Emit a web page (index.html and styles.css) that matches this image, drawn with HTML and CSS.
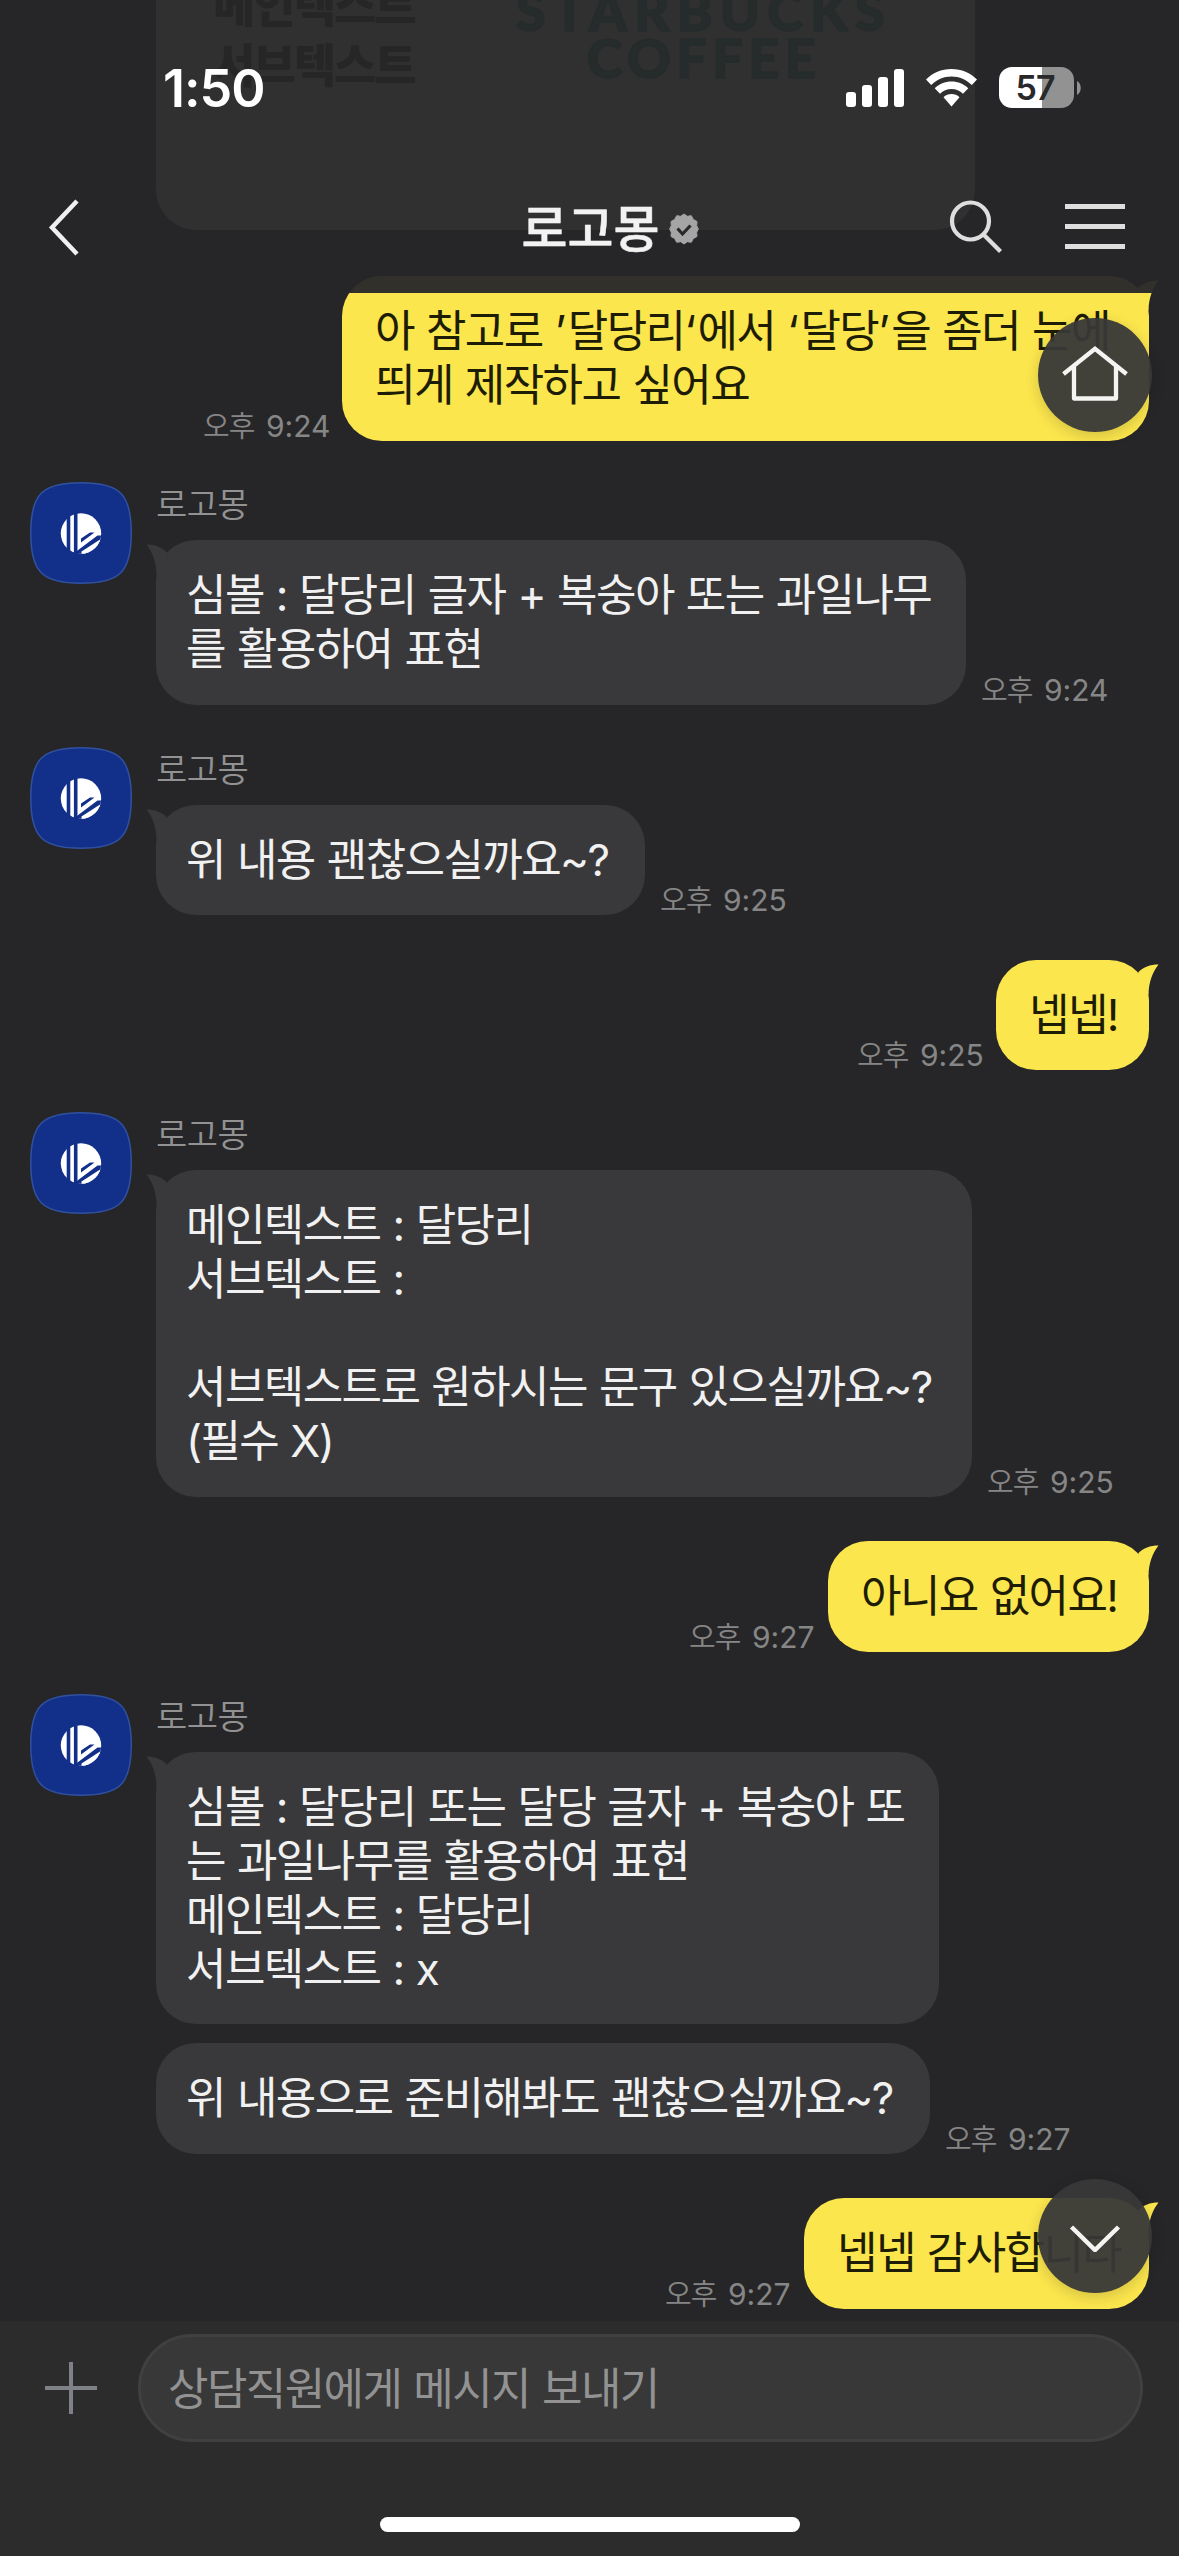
FILE: index.html
```html
<!DOCTYPE html>
<html lang="ko">
<head>
<meta charset="utf-8">
<title>로고몽</title>
<link rel="stylesheet" href="styles.css">
</head>
<body>
<svg class="defs" width="0" height="0" aria-hidden="true">
  <defs>
    <symbol id="logo" viewBox="0 0 102 102">
      <path class="tile" d="M51 .75C90 .75 101.250 12 101.250 51S90 101.250 51 101.250 .75 90 .75 51 12 .75 51 .75Z"/>
      <clipPath id="disc"><circle cx="51" cy="51.500" r="20.200"/></clipPath>
      <g clip-path="url(#disc)">
        <path fill="#fff" d="M30 30h6.700v44H30zM40.300 30h3.600v40.500h-3.600zM47.500 30h25v44H50L47.500 69z"/>
        <path fill="#12308a" d="M51 56.500 60 50.500h4.500L51 60.500zM47.500 68.500 67.500 53.500H74V55L49 74H44z"/>
        <path fill="#fff" d="M51.500 69.500 73 55.500V74H51.500z"/>
      </g>
    </symbol>
    <symbol id="tail" viewBox="0 0 24 34">
      <path d="M.5 4.500C9 4.500 15.500 7 20.500 12L24 34H10.500C10 22 7 13 .5 4.500Z"/>
    </symbol>
  </defs>
</svg>
<div class="screen">
  <main class="chat">
    <section class="row mine first">
      <time>오후 <b>9:24</b></time>
      <div class="bubble w-first">
        <svg class="tail"><use href="#tail"/></svg>
        <p>아 참고로 <i>’</i>달당리<i>‘</i>에서 <i>‘</i>달당<i>’</i>을 좀더 눈에</p>
        <p>띄게 제작하고 싶어요</p>
      </div>
    </section>

    <section class="row theirs">
      <svg class="avatar"><use href="#logo"/></svg>
      <div class="stack">
        <h2>로고몽</h2>
        <div class="line">
          <div class="bubble w-symbol">
            <svg class="tail"><use href="#tail"/></svg>
            <p>심볼 : 달당리 글자 + 복숭아 또는 과일나무</p>
            <p>를 활용하여 표현</p>
          </div>
          <time>오후 <b>9:24</b></time>
        </div>
      </div>
    </section>

    <section class="row theirs">
      <svg class="avatar"><use href="#logo"/></svg>
      <div class="stack">
        <h2>로고몽</h2>
        <div class="line">
          <div class="bubble w-ok">
            <svg class="tail"><use href="#tail"/></svg>
            <p>위 내용 괜찮으실까요~?</p>
          </div>
          <time>오후 <b>9:25</b></time>
        </div>
      </div>
    </section>

    <section class="row mine">
      <time>오후 <b>9:25</b></time>
      <div class="bubble w-yes">
        <svg class="tail"><use href="#tail"/></svg>
        <p>넵넵!</p>
      </div>
    </section>

    <section class="row theirs">
      <svg class="avatar"><use href="#logo"/></svg>
      <div class="stack">
        <h2>로고몽</h2>
        <div class="line">
          <div class="bubble w-sub">
            <svg class="tail"><use href="#tail"/></svg>
            <p>메인텍스트 : 달당리</p>
            <p>서브텍스트 :</p>
            <p>&nbsp;</p>
            <p>서브텍스트로 원하시는 문구 있으실까요~?</p>
            <p>(필수 X)</p>
          </div>
          <time>오후 <b>9:25</b></time>
        </div>
      </div>
    </section>

    <section class="row mine">
      <time>오후 <b>9:27</b></time>
      <div class="bubble w-none">
        <svg class="tail"><use href="#tail"/></svg>
        <p>아니요 없어요!</p>
      </div>
    </section>

    <section class="row theirs">
      <svg class="avatar"><use href="#logo"/></svg>
      <div class="stack">
        <h2>로고몽</h2>
        <div class="line">
          <div class="bubble w-recap">
            <svg class="tail"><use href="#tail"/></svg>
            <p>심볼 : 달당리 또는 달당 글자 + 복숭아 또</p>
            <p>는 과일나무를 활용하여 표현</p>
            <p>메인텍스트 : 달당리</p>
            <p>서브텍스트 : x</p>
          </div>
        </div>
        <div class="line next">
          <div class="bubble w-ready">
            <p>위 내용으로 준비해봐도 괜찮으실까요~?</p>
          </div>
          <time>오후 <b>9:27</b></time>
        </div>
      </div>
    </section>

    <section class="row mine">
      <time>오후 <b>9:27</b></time>
      <div class="bubble w-thanks">
        <svg class="tail"><use href="#tail"/></svg>
        <p>넵넵 감사합니다</p>
      </div>
    </section>
  </main>

  <header class="top">
    <div class="behind" aria-hidden="true">
      <div class="sample">
        <div class="sample-ko"><span>메인텍스트</span><span>서브텍스트</span></div>
        <div class="sample-en"><span class="en1">STARBUCKS</span><span class="en2">COFFEE</span></div>
      </div>
    </div>
    <div class="status">
      <span class="clock">1:50</span>
      <div class="indicators">
        <svg width="58" height="38" viewBox="0 0 58 38" fill="#fff"><rect y="23" width="10" height="15" rx="3"/><rect x="16" y="16" width="10" height="22" rx="3"/><rect x="32" y="8" width="10" height="30" rx="3"/><rect x="48" width="10" height="38" rx="3"/></svg>
        <svg class="wifi" width="51" height="38" viewBox="0 0 51 38" fill="#fff"><path d="M25.500 0C35.500 0 44.500 4 51 10.500L45.800 16C40.500 10.800 33.500 7.500 25.500 7.500S10.500 10.800 5.200 16L0 10.500C6.500 4 15.500 0 25.500 0Z"/><path d="M25.500 12.500C32 12.500 38 15 42.300 19.200L37 24.700C34 21.800 30 20 25.500 20S17 21.800 14 24.700L8.700 19.200C13 15 19 12.500 25.500 12.500Z"/><path d="M25.500 25C28.500 25 31.300 26.200 33.500 28.200L25.500 37.500 17.500 28.200C19.700 26.200 22.500 25 25.500 25Z"/></svg>
        <div class="battery"><span>57</span></div>
        <svg width="4" height="14" viewBox="0 0 4 14"><path d="M0 0C5 3 5 11 0 14Z" fill="#929293"/></svg>
      </div>
    </div>
    <nav class="nav">
      <svg class="back" width="34" height="60" viewBox="0 0 34 60"><path d="M31 4 6 30.500 31 57" fill="none" stroke="#f0f0f0" stroke-width="4.500"/></svg>
      <h1>로고몽<svg width="30" height="32" viewBox="0 0 30 32"><path fill="#a5a5a6" stroke="#a5a5a6" stroke-linejoin="round" d="m15 1 3.300 2.300 4-.6 2 3.700 3.700 2.200-.3 4.100L29.300 16l-1.600 3.300.3 4.100-3.700 2.200-2 3.700-4-.6L15 31l-3.300-2.300-4 .6-2-3.700L2 23.400l.3-4.100L.7 16l1.600-3.300L2 8.600l3.700-2.200 2-3.700 4 .6Z"/><path d="m8.500 15.500 5 5.500 8-8.500" fill="none" stroke="#29292b" stroke-width="3.200"/></svg></h1>
      <div class="actions">
        <svg width="54" height="56" viewBox="0 0 54 56" fill="none" stroke="#dedede" stroke-width="4.200"><circle cx="21.500" cy="22" r="18.500"/><path d="m34.500 35.500 17 17"/></svg>
        <svg width="60" height="46" viewBox="0 0 60 46" fill="#dedede"><rect width="60" height="5"/><rect y="20" width="60" height="5"/><rect y="40" width="60" height="5"/></svg>
      </div>
    </nav>
  </header>

  <button class="fab home" aria-label="홈"><svg width="68" height="58" viewBox="0 0 68 58" fill="none" stroke="#f4f4f2" stroke-width="4.300" stroke-linejoin="round"><path d="M2.500 28 34 2.800 65.500 28" stroke-linejoin="miter"/><path d="M13 21v31.500h42V21"/></svg></button>
  <button class="fab down" aria-label="아래로"><svg width="54" height="32" viewBox="0 0 54 32" fill="none" stroke="#f4f4f2" stroke-width="4.500"><path d="M3.500 7 27 30 50.500 7"/></svg></button>

  <footer class="composer">
    <div class="entry">
      <svg width="54" height="54" viewBox="0 0 54 54" stroke="#7e8187" stroke-width="4"><path d="M27 1v52M1 27h52"/></svg>
      <div class="field">상담직원에게 메시지 보내기</div>
    </div>
    <div class="indicator"></div>
  </footer>
</div>
</body>
</html>
```
FILE: styles.css
```css
* { box-sizing: border-box; margin: 0; padding: 0; }
body { background: #262628; font-family: "Noto Sans CJK KR", sans-serif; color: #f1f1f1; }
.defs { position: absolute; }
.screen { position: relative; width: 1179px; height: 2556px; overflow: hidden; background: #262628; }

.chat { display: flex; flex-direction: column; padding-top: 276px; }
.row { display: flex; align-items: flex-start; }
.theirs { margin-top: 42px; padding-left: 30px; gap: 24px; }
.mine { margin-top: 44.500px; padding-right: 30px; justify-content: flex-end; align-items: flex-end; gap: 13px; }
.mine.first { margin-top: 0; }
.mine.first + .theirs { margin-top: 41.500px; }
.avatar { width: 102px; height: 102px; flex: none; }
.tile { fill: #12308a; stroke: #31519f; stroke-width: 1.500px; }
.stack { display: flex; flex-direction: column; align-items: flex-start; }
h2 { height: 58px; font-size: 34px; line-height: 42px; font-weight: 350; letter-spacing: -0.500px; color: #929293; }
.line { display: flex; align-items: flex-end; gap: 15px; }
.line.next { margin-top: 19px; }

.bubble { position: relative; padding: 28px 0 28.500px 30px; border-radius: 40px; background: #39393b; }
.mine .bubble { padding-left: 33px; background: #fbe64d; color: #1d1c05; }
.bubble p { height: 54px; line-height: 54px; white-space: nowrap; }
.bubble i { font-style: normal; letter-spacing: 1.600px; }
.bubble p, .field { font-family: Inter, "Noto Sans CJK KR", sans-serif; font-size: 44px; font-weight: 400; letter-spacing: -1.600px; word-spacing: 1.300px; }
.tail { position: absolute; left: -10px; top: 0; width: 24px; height: 34px; fill: #39393b; }
.mine .tail { left: auto; right: -10px; transform: scaleX(-1); fill: #fbe64d; }
.w-first { width: 807px; }
.w-symbol { width: 810px; }
.w-ok { width: 489px; }
.w-yes { width: 153px; }
.w-sub { width: 816px; }
.w-none { width: 321px; }
.w-recap { width: 783px; }
.w-ready { width: 774px; }
.w-thanks { width: 345px; }

time { width: 126px; height: 35px; font-size: 29px; line-height: 36px; font-weight: 350; letter-spacing: -1px; word-spacing: 4.500px; color: #868687; white-space: nowrap; }
time b { font-family: Inter, sans-serif; font-size: 30px; font-weight: 400; letter-spacing: 0; }

.top { position: absolute; inset: 0 0 auto; height: 293px; overflow: hidden; background: rgba(38, 38, 40, 0.950); }
.behind { position: absolute; inset: 0; }
.sample { display: flex; gap: 100px; width: 819px; height: 230px; margin-left: 156px; padding-left: 57px; border-radius: 0 0 40px 40px; background: #303030; }
.sample-ko, .sample-en { display: flex; flex-direction: column; font-weight: 900; }
.sample-ko { width: 203px; color: #262627; font-size: 46px; line-height: 60px; letter-spacing: -2px; margin-top: -28px; }
.sample-en { width: 376px; align-items: center; font-family: Lato, sans-serif; font-size: 54px; line-height: 47px; letter-spacing: 7.300px; color: #262b2c; -webkit-text-stroke: 1.500px #262b2c; margin-top: -13px; white-space: nowrap; }
.en2 { letter-spacing: 5.500px; }
.status { position: relative; display: flex; justify-content: space-between; height: 176px; padding: 62px 98px 0 163px; }
.clock { font: 600 52px/54px Inter, sans-serif; letter-spacing: -1px; color: #fff; }
.indicators { display: flex; align-items: center; height: 51px; }
.wifi { margin: 0 22px; }
.battery { display: flex; align-items: center; justify-content: center; width: 75px; height: 41px; margin-right: 3px; padding-right: 3px; border-radius: 13px; background: linear-gradient(90deg, #fff 57%, #929293 57%); font: 600 34px/41px Inter, sans-serif; letter-spacing: -1px; color: #29292b; }
.nav { position: relative; display: grid; grid-template-columns: 1fr auto 1fr; align-items: center; height: 102px; padding: 0 54px 0 46px; }
h1 { position: relative; left: 4px; top: -2px; display: flex; align-items: center; gap: 9px; margin-right: -41px; font-size: 50px; line-height: 60px; font-weight: 500; color: #f2f2f2; -webkit-text-stroke: 0.500px #f2f2f2; }
h1 svg { margin-top: 8px; }
.actions { display: flex; align-items: center; justify-content: flex-end; gap: 62px; }

.fab { position: absolute; left: 1038px; display: flex; align-items: center; justify-content: center; width: 114px; height: 114px; border: 0; border-radius: 50%; background: rgba(56, 56, 56, 0.950); box-shadow: 0 4px 14px rgba(0, 0, 0, 0.160); }
.home { top: 318px; }
.down { top: 2179px; }

.composer { position: absolute; inset: 2321px 0 0; display: flex; flex-direction: column; align-items: center; padding-top: 13px; background: #2c2c2c; }
.entry { display: flex; align-items: center; gap: 40px; width: 100%; padding: 0 36px 0 44px; }
.field { flex: 1; height: 108px; padding-left: 27px; border: 3px solid #404040; border-radius: 54px; background: #383838; line-height: 104px; color: #929292; }
.indicator { width: 420px; height: 15px; margin-top: 75px; border-radius: 8px; background: #fff; }
```
